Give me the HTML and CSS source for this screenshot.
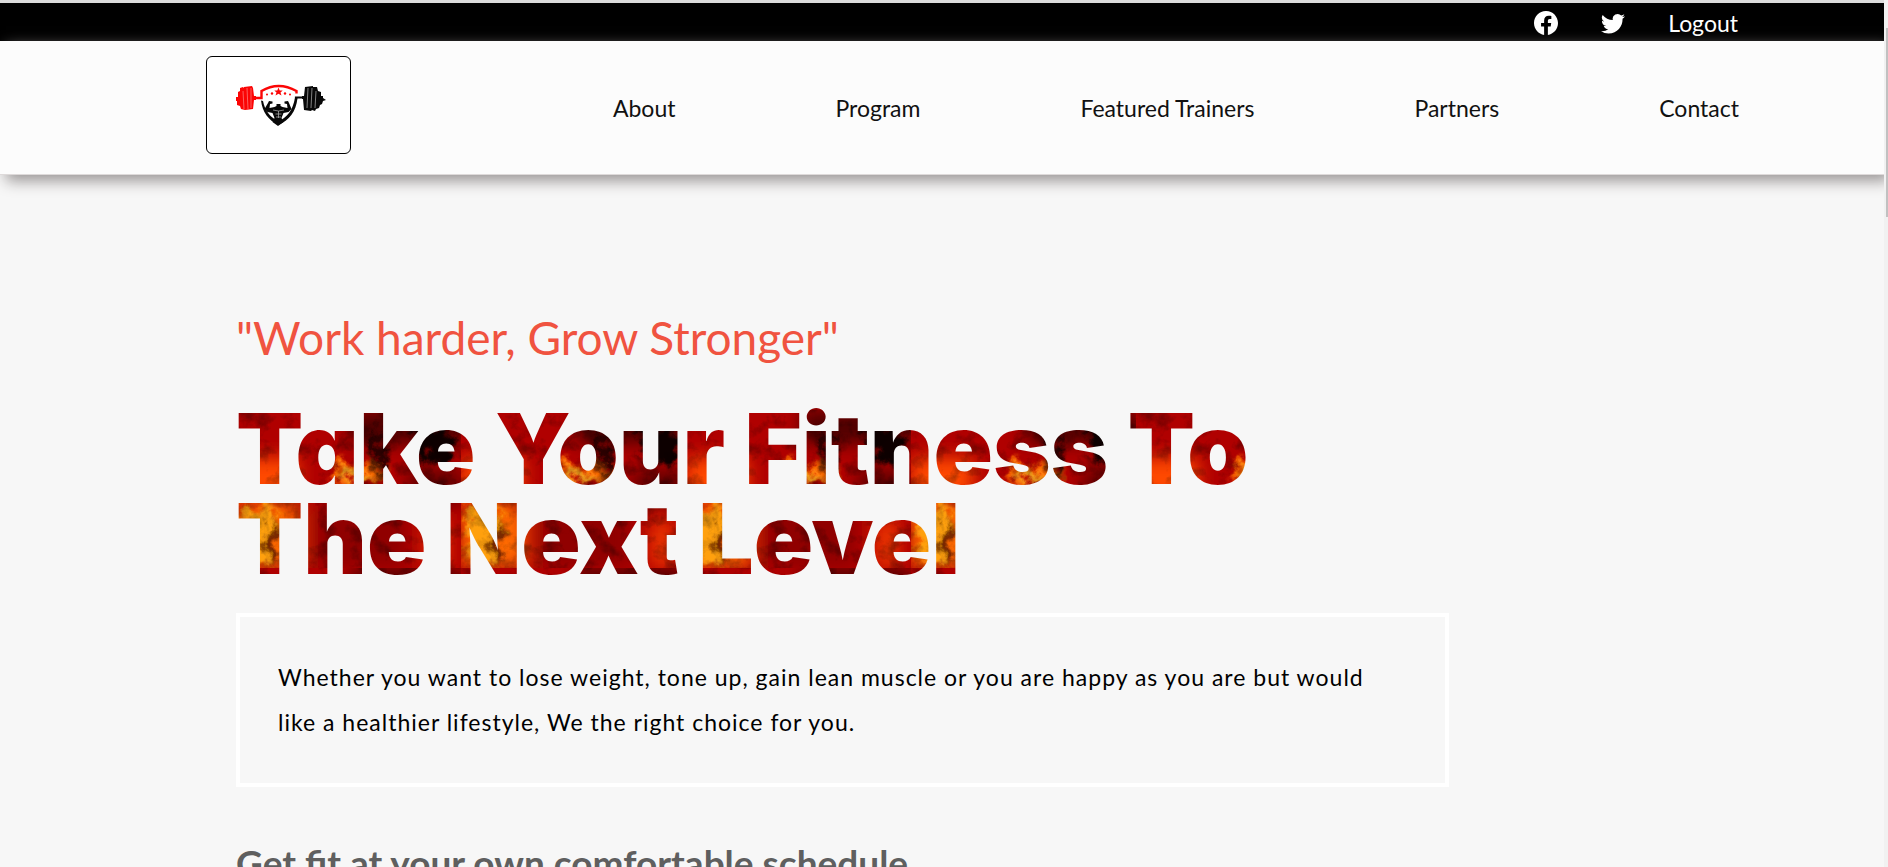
FILE: index.html
```html
<!DOCTYPE html>
<html lang="en">
<head>
<meta charset="utf-8">
<meta name="viewport" content="width=device-width, initial-scale=1">
<title>Fitness</title>
<link rel="stylesheet" href="styles.css">
</head>
<body>
<div class="page">
  <div class="topbar">
    <a class="social" href="#" aria-label="Facebook"><svg viewBox="0 0 16 16" width="24" height="24"><path fill="currentColor" d="M16 8.049c0-4.446-3.582-8.05-8-8.05C3.58 0-.002 3.603-.002 8.05c0 4.017 2.926 7.347 6.75 7.951v-5.625h-2.03V8.05H6.75V6.275c0-2.017 1.195-3.131 3.022-3.131.876 0 1.791.157 1.791.157v1.98h-1.009c-.993 0-1.303.621-1.303 1.258v1.51h2.218l-.354 2.326H9.25V16c3.824-.604 6.75-3.934 6.75-7.951z"/></svg></a>
    <a class="social" href="#" aria-label="Twitter"><svg viewBox="0 0 16 16" width="24" height="24"><path fill="currentColor" d="M5.026 15c6.038 0 9.341-5.003 9.341-9.334 0-.14 0-.282-.006-.422A6.685 6.685 0 0 0 16 3.542a6.658 6.658 0 0 1-1.889.518 3.301 3.301 0 0 0 1.447-1.817 6.533 6.533 0 0 1-2.087.793A3.286 3.286 0 0 0 7.875 6.03a9.325 9.325 0 0 1-6.767-3.429 3.289 3.289 0 0 0 1.018 4.382A3.323 3.323 0 0 1 .64 6.575v.045a3.288 3.288 0 0 0 2.632 3.218 3.203 3.203 0 0 1-.865.115 3.23 3.23 0 0 1-.614-.057 3.283 3.283 0 0 0 3.067 2.277A6.588 6.588 0 0 1 .78 13.58a6.32 6.32 0 0 1-.78-.045A9.344 9.344 0 0 0 5.026 15z"/></svg></a>
    <a class="logout" href="#">Logout</a>
  </div>
  <header class="navbar">
    <a class="logo" href="#" aria-label="Home">
      <svg viewBox="0 0 94 42" width="94" height="42">
        <g fill="#fb0505">
          <path d="M0 16.500l4-1.500v-2h2V8l2-1V4l3-1 1 1V3l8-1 1 2 1 8h2v4h-2l-1 9-8 1-4-1-1-3-3-1v-4H4v-2z"/>
          <path d="M46.500 3.500l1.200 3h3l-2.200 2 1 3-3-1.700-3 1.700 1-3-2.200-2h3z"/>
          <circle cx="40" cy="9.500" r="1.200"/><circle cx="53" cy="9.500" r="1.200"/><circle cx="35" cy="10.500" r="1"/><circle cx="58" cy="10.500" r="1"/>
        </g>
        <path d="M21 14H29.500V7Q46.500-3 64.500 7V9.500" fill="none" stroke="#fb0505" stroke-width="2.400"/>
        <g stroke="#fff" stroke-width=".6" opacity=".6"><path d="M11 7l1 18M15 4l1 21M19 4v20"/></g>
        <path d="M72 13.500H64V16" fill="none" stroke="#080808" stroke-width="2.200"/>
        <g fill="#080808">
          <path d="M70 12h2l1-9 8-1v1h4l1 4 3 1v4h2v2l3 2-3 1-1 3-2 1-1 3-3 1-1 2-3-1-1 1-7-1-1-11h-1z"/>
          <path d="M29 16.500l2 .5c2 10 7 16 15.500 20.500C55 33 60.500 27 63 14h2.500C64 28 57 36 46.500 41 36 36 30.500 28 29 16.500z"/>
          <path d="M36 19l1-2 3.500.5v2l-2.500.5-.5 4 5-1 2-1v-2h4v2l2 1 5 1-.5-4-2.500-.5v-2l3.500-.5 1 2 2.500 6-3 3-5 1-2 5 2 4-5.500 4-5.500-4 2-4-2-5-5-1-3-3z"/>
        </g>
        <g stroke="#fff" fill="none" stroke-width=".7" opacity=".7"><path d="M76 4l-1 20M80 4l-1 20M84 7l-1 17"/><path d="M41 26l5.500 1 5.500-1M46.500 27v7M43.500 30h6M44 33h5"/></g>
      </svg>
    </a>
    <nav class="links">
      <a href="#about">About</a>
      <a href="#program">Program</a>
      <a href="#trainers">Featured Trainers</a>
      <a href="#partners">Partners</a>
      <a href="#contact">Contact</a>
    </nav>
  </header>
  <main class="hero">
    <p class="quote">"Work harder, Grow Stronger"</p>
    <h1 class="title">Take Your Fitness To The Next Level</h1>
    <p class="lead">Whether you want to lose weight, tone up, gain lean muscle or you are happy as you are but would like a healthier lifestyle, We the right choice for you.</p>
    <h2 class="subtitle">Get fit at your own comfortable schedule</h2>
  </main>
</div>
<div class="scroll" aria-hidden="true"><div class="thumb"></div></div>
</body>
</html>
```
FILE: styles.css
```css
* { box-sizing: border-box; }
body {
  margin: 0;
  height: 100vh;
  display: flex;
  overflow: hidden;
  background: #f7f7f7;
  font-family: Lato, sans-serif;
  color: #000;
}
a { color: inherit; text-decoration: none; }
.page {
  flex: 1;
  min-width: 0;
  overflow: hidden;
  border-top: 3px solid #dcdcdc;
}
.topbar {
  height: 38px;
  padding: 2px 146px 0 0;
  display: flex;
  align-items: center;
  justify-content: flex-end;
  gap: 43px;
  background: #000;
  color: #fff;
}
.social { display: flex; }
.logout { font-size: 23px; line-height: 34px; }
.navbar {
  position: relative;
  display: flex;
  align-items: center;
  justify-content: space-between;
  padding: 15px 145px 20px 206px;
  background: #fcfcfc;
  border-bottom: 1px solid #dedada;
  box-shadow: 6px 6px 14px #9a9696;
}
.logo {
  width: 145px;
  height: 98px;
  display: flex;
  align-items: center;
  justify-content: center;
  background: #fff;
  border: 1px solid #000;
  border-radius: 6px;
}
.links {
  display: flex;
  gap: 160px;
  font-size: 23px;
  line-height: 32px;
  padding-top: 6px;
  color: #111;
}
.hero { padding: 135px 0 0 236px; }
.hero > * { max-width: 1213px; margin: 0; }
.quote {
  color: #f05340;
  font-size: 46px;
  line-height: 56px;
}
.hero .title {
  margin-top: 38px;
  font-family: Inter, sans-serif;
  font-size: 98px;
  font-weight: 900;
  line-height: 90px;
  font-feature-settings: "cv11";
  color: transparent;
  background-position: 0 6px;
  background-image: url("data:image/svg+xml,%3Csvg xmlns='http://www.w3.org/2000/svg' width='225' height='158' viewBox='0 0 225 158'%3E%3Cdefs%3E%3Cfilter id='b' x='-50%25' y='-50%25' width='200%25' height='200%25'%3E%3CfeGaussianBlur stdDeviation='9'/%3E%3C/filter%3E%3Cfilter id='d' x='-50%25' y='-50%25' width='200%25' height='200%25'%3E%3CfeGaussianBlur stdDeviation='3' result='s'/%3E%3CfeTurbulence type='fractalNoise' baseFrequency='.07' numOctaves='4' seed='4' result='n'/%3E%3CfeDisplacementMap in='s' in2='n' scale='30'/%3E%3C/filter%3E%3Cfilter id='n' x='0' y='0' width='100%25' height='100%25'%3E%3CfeTurbulence type='fractalNoise' baseFrequency='.06' numOctaves='5' seed='8'/%3E%3CfeColorMatrix values='0 0 0 0 0 0 0 0 0 0 0 0 0 0 0 3 0 0 0 -1.4'/%3E%3C/filter%3E%3C/defs%3E%3Crect width='225' height='158' fill='%23b00000'/%3E%3Cg filter='url(%23b)'%3E%3Crect x='0' y='48' width='62' height='40' fill='%23ff4a00'/%3E%3Crect x='115' y='0' width='110' height='34' fill='%23500000'/%3E%3Crect x='80' y='96' width='90' height='62' fill='%23900000'/%3E%3Crect x='172' y='60' width='53' height='35' fill='%23600000'/%3E%3Crect x='0' y='96' width='64' height='62' fill='%23ff6a00'/%3E%3Crect x='190' y='110' width='22' height='48' fill='%23f03800'/%3E%3C/g%3E%3Cg filter='url(%23d)'%3E%3Crect x='96' y='55' width='54' height='17' fill='%23ff6a00'/%3E%3Crect x='106' y='62' width='24' height='8' fill='%23ffb020'/%3E%3Crect x='138' y='18' width='10' height='52' fill='%23200000'/%3E%3Crect x='178' y='12' width='38' height='38' fill='%23080000'/%3E%3Crect x='8' y='98' width='34' height='52' fill='%23ffa008'/%3E%3Crect x='30' y='112' width='12' height='38' fill='%23702000'/%3E%3C/g%3E%3Crect width='225' height='158' filter='url(%23n)' opacity='.3'/%3E%3C/svg%3E");
  background-clip: text;
  -webkit-background-clip: text;
}
.hero .lead {
  margin-top: 29px;
  padding: 38px;
  border: 4px solid #fff;
  font-size: 23px;
  line-height: 45px;
  letter-spacing: 1px;
}
.hero .subtitle {
  margin-top: 48px;
  color: #5f5f5f;
  font-size: 37px;
  line-height: 56px;
}
.scroll {
  width: 4px;
  padding: 28px 0 0 2px;
  background: #f1f1f1;
}
.thumb { height: 189px; background: #c1c1c1; }
```
